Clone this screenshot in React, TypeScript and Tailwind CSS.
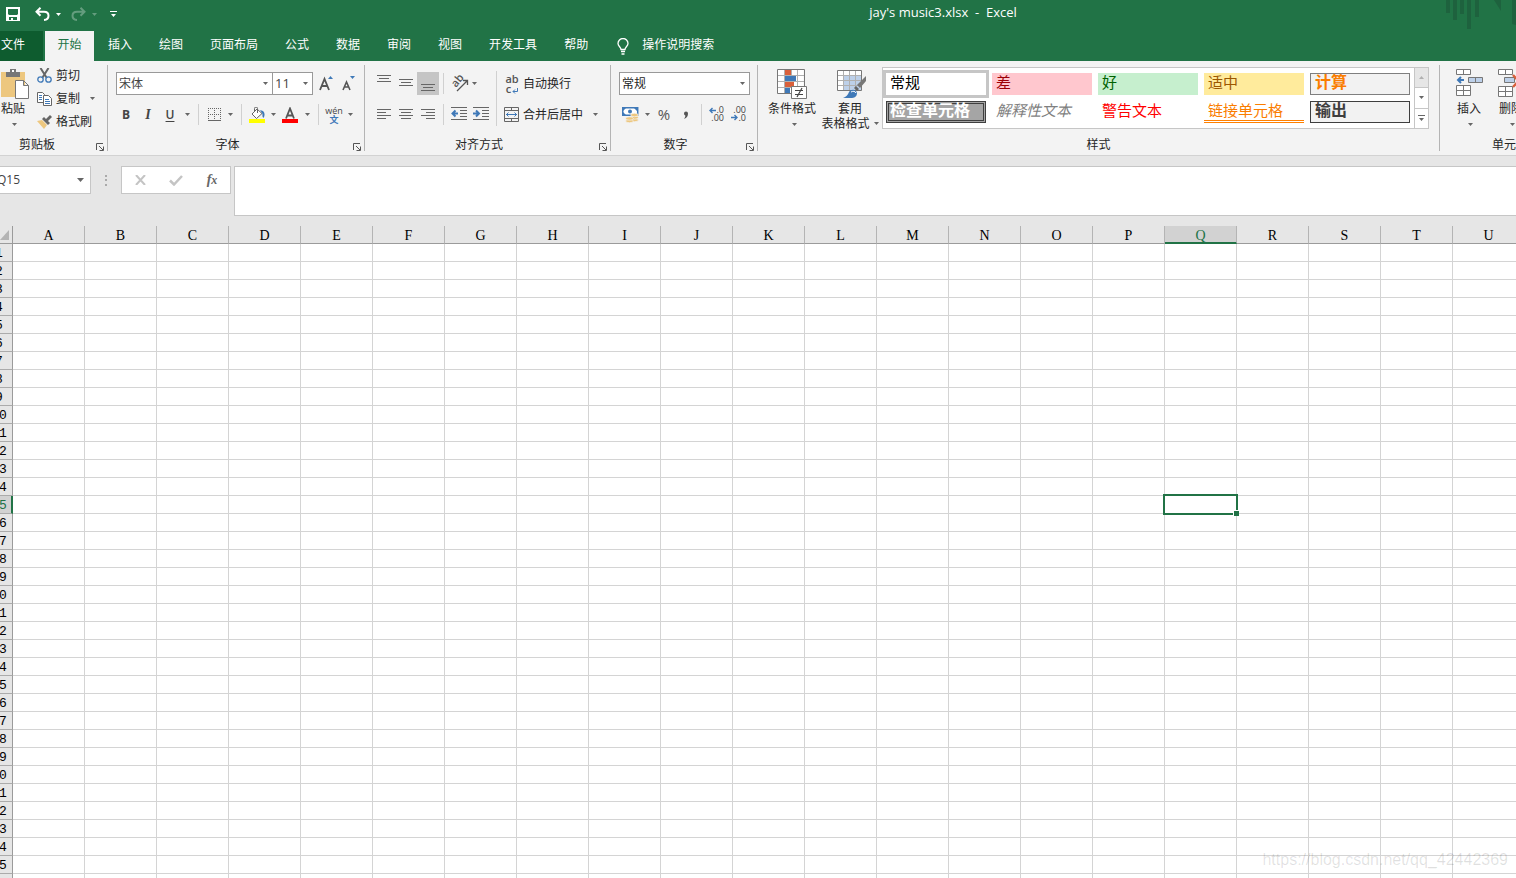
import React from "react"
import clsx from "clsx"

const TABS = ["插入", "绘图", "页面布局", "公式", "数据", "审阅", "视图", "开发工具", "帮助"]
const COLUMNS = "ABCDEFGHIJKLMNOPQRSTU".split("")
const ROWS = Array.from({ length: 36 }, (_, i) => i + 1)

const ACTIVE_COLUMN = "Q"
const ACTIVE_ROW = 15

const CELL_STYLES = [
  { name: "常规", className: "pl-1 bg-white text-black ring-3 ring-[#c6c6c6]" },
  { name: "差", className: "pl-1 bg-[#ffc7ce] text-[#9c0006]" },
  { name: "好", className: "pl-1 bg-[#c6efce] text-[#006100]" },
  { name: "适中", className: "pl-1 bg-[#ffeb9c] text-[#9c5700]" },
  { name: "计算", className: "pl-1 bg-[#f2f2f2] text-base leading-4 font-bold text-[#fa7d00] border border-[#7f7f7f]" },
  { name: "检查单元格", className: "pl-px bg-[#a5a5a5] text-base leading-3 font-bold text-white border-3 border-double border-[#3f3f3f]" },
  { name: "解释性文本", className: "pl-1 italic text-[#7f7f7f]" },
  { name: "警告文本", className: "pl-1 text-[#ff0000]" },
  { name: "链接单元格", className: "pl-1 text-[#fa7d00] border-b-3 border-double border-[#ff8001]" },
  { name: "输出", className: "pl-1 bg-[#f2f2f2] text-base leading-4 font-bold text-[#3f3f3f] border border-[#3f3f3f]" },
]

export default function App() {
  return (
    <div className="relative flex h-screen flex-col overflow-hidden bg-[#e6e6e6] font-['Open_Sans','Noto_Sans_CJK_SC',sans-serif] text-xs text-[#262626]">
      <TitleBar />
      <TabBar />
      <Ribbon />
      <FormulaBar />
      <Sheet />
      <p className="pointer-events-none absolute right-2 bottom-2 font-['Liberation_Sans',sans-serif] text-base leading-5 text-black/12">
        https://blog.csdn.net/qq_42442369
      </p>
    </div>
  )
}

function TitleBar() {
  return (
    <header className="relative flex h-[31px] shrink-0 items-start bg-[#217346] text-white">
      <div className="flex h-7 w-[370px] shrink-0 items-center pl-1.5">
        <button aria-label="保存" className="mr-[15px]">
          <svg width="14" height="14" viewBox="0 0 14 14" fill="#fff" fillRule="evenodd">
            <path d="M0 0h14v14H0zM2 2v5l1 1h8l1-1V2zM3 10v3h2v-2h2v2h4v-3z" />
          </svg>
        </button>
        <button aria-label="撤消">
          <svg width="15" height="14" viewBox="0 0 15 14" fill="none" stroke="#fff" strokeWidth="2">
            <path d="M5.500 .8 1.500 4.800l4 4M2 4.800h7c3 0 4.500 1.800 4.500 4S12 12.800 9 13" />
          </svg>
        </button>
        <ArrowButton label="撤消选项" className="w-4" />
        <button aria-label="恢复" className="ml-[5px] opacity-30">
          <svg width="15" height="14" viewBox="0 0 15 14" fill="none" stroke="#fff" strokeWidth="2">
            <path d="M9.500 .8l4 4-4 4M13 4.800H6c-3 0-4.500 1.800-4.500 4S3 12.800 6 13" />
          </svg>
        </button>
        <ArrowButton label="恢复选项" className="w-4 opacity-30" />
        <button aria-label="自定义快速访问工具栏" className="ml-2">
          <svg width="7" height="7" viewBox="0 0 7 7" fill="#fff">
            <path d="M0 0h7v1H0zM1 3h5L3.500 6z" />
          </svg>
        </button>
      </div>
      <h1 className="flex-1 text-center text-[13px] leading-6 whitespace-pre">{"jay's music3.xlsx  -  Excel"}</h1>
      <svg className="absolute top-0 right-0" width="72" height="31" viewBox="0 0 72 31" fill="#1e623e">
        <path d="M2 0h4v13H2zM9 0h4v20H9zM16 0h4v14h-4zM23 0h4v29h-4zM31 0h4v17h-4zM50 0h7v11zM68 0h4v25l-4-1z" />
      </svg>
    </header>
  )
}

function TabBar() {
  return (
    <nav className="flex h-[30px] shrink-0 items-stretch bg-[#217346] text-white">
      <button className="mr-0.5 w-[43px] bg-[#0e5c2f] pb-[3px] pl-px text-left whitespace-nowrap">文件</button>
      <button className="w-[49px] bg-[#f3f3f3] pb-[3px] text-[#217346]">开始</button>
      <div className="ml-3.5 flex gap-[27px]">
        {TABS.map((tab) => (
          <button key={tab} className="pb-[3px]">{tab}</button>
        ))}
      </div>
      <button className="ml-[29px] flex items-center gap-[13px] pb-[3px]">
        <svg className="mt-1" width="12" height="17" viewBox="0 0 12 17" fill="none" stroke="#fff" strokeWidth="1.300">
          <path d="M4 11.500C4 9 1 8.500 1 5.500a5 5 0 0 1 10 0c0 3-3 3.500-3 6zM4 13.500h4M4.500 16h3" />
        </svg>
        操作说明搜索
      </button>
    </nav>
  )
}

function Ribbon() {
  return (
    <div className="flex h-[95px] shrink-0 border-b border-[#d2d2d2] bg-[#f3f3f3]">
      <ClipboardGroup />
      <Divider />
      <FontGroup />
      <Divider />
      <AlignmentGroup />
      <Divider />
      <NumberGroup />
      <Divider />
      <StylesGroup />
      <Divider />
      <CellsGroup />
    </div>
  )
}

type GroupProps = {
  label: string,
  launcher?: boolean,
  className?: string,
  labelClassName?: string,
  children: React.ReactNode,
}

function Group({ label, launcher = false, className = "", labelClassName = "", children }: GroupProps) {
  return (
    <section aria-label={label} className={clsx("flex shrink-0 flex-col", className)}>
      <div className="flex h-[73px] items-start">{children}</div>
      <div className="flex h-5 items-center pt-0.5">
        <span className={clsx("flex-1 text-center", labelClassName)}>{label}</span>
        {launcher && (
          <button aria-label={`${label}设置`} className="mt-1 w-[17px] pl-1.5">
            <svg width="8" height="8" viewBox="0 0 8 8" fill="none" stroke="#555">
              <path d="M.5 7V.5H7M3 3l4 4M7.500 3.500v4h-4" />
            </svg>
          </button>
        )}
      </div>
    </section>
  )
}

function Divider() {
  return <div className="my-1 w-px shrink-0 bg-[#b4b4b4]" />
}

function Separator({ className = "mx-[5px] h-[21px]" }: { className?: string }) {
  return <div className={clsx("w-px shrink-0 bg-[#d0d0d0]", className)} />
}

function Arrow() {
  return (
    <svg className="inline-block" width="5" height="3" viewBox="0 0 5 3" fill="currentColor">
      <path d="M0 0h5L2.500 3z" />
    </svg>
  )
}

function ArrowButton({ label, className = "w-3 text-[#666]" }: { label: string, className?: string }) {
  return (
    <button aria-label={label} className={clsx("flex h-[22px] shrink-0 items-center justify-center", className)}>
      <Arrow />
    </button>
  )
}

type ToolProps = {
  label: string,
  className?: string,
  children: React.ReactNode,
}

function Tool({ label, className = "w-[22px]", children }: ToolProps) {
  return (
    <button aria-label={label} className={clsx("flex h-[23px] shrink-0 items-center justify-center", className)}>
      {children}
    </button>
  )
}

function Picker({ label, value, className }: { label: string, value: string, className: string }) {
  return (
    <div className={clsx("relative h-[23px] border border-[#999] bg-white", className)}>
      <select aria-label={label} className="block h-full w-full appearance-none bg-transparent pl-0.5">
        <option>{value}</option>
      </select>
      <span className="pointer-events-none absolute inset-y-0 right-1 flex items-center text-[#666]">
        <Arrow />
      </span>
    </div>
  )
}

function ClipboardGroup() {
  return (
    <Group label="剪贴板" launcher className="w-[107px]" labelClassName="pr-4">
      <button className="flex w-[30px] flex-col items-start pt-[7px] pl-px leading-4 whitespace-nowrap">
        <svg className="mb-px" width="29" height="32" viewBox="0 0 29 32">
          <path d="M0 4h24v25H0z" fill="#edc77f" />
          <path d="M5 4h4V1h6v3h4v5H5z" fill="#777" />
          <path d="M11 2h2v2h-2z" fill="#fff" />
          <path d="M14.500 12.500h8l5 5v13h-13zM22.500 12.500v5h5" fill="#fff" stroke="#777" />
        </svg>
        粘贴
        <span className="flex h-3.5 w-[26px] items-center justify-center text-[#666]"><Arrow /></span>
      </button>
      <div className="flex flex-col items-start pt-[3px] pl-[7px]">
        <button className="flex h-[23px] items-center gap-1">
          <svg width="15" height="15" viewBox="0 0 15 15" fill="none">
            <path d="M3.500 0 9.800 10M11.500 0 5.200 10" stroke="#666" strokeWidth="2" />
            <circle cx="3.500" cy="11.500" r="2.700" stroke="#3f79b8" strokeWidth="1.300" />
            <circle cx="11.500" cy="11.500" r="2.700" stroke="#3f79b8" strokeWidth="1.300" />
          </svg>
          剪切
        </button>
        <div className="flex">
          <button className="flex h-[23px] items-center gap-1">
            <svg width="15" height="14" viewBox="0 0 15 14" fill="#fff" stroke="#666">
              <path d="M.5.5h5l2 2v8h-7z" />
              <path d="M6.500 3.500h5l3 3v7h-8z" />
              <path d="M2 3.500h3M2 5.500h3M2 7.500h3M8 7.500h4M8 9.500h5M8 11.500h5" stroke="#3f79b8" />
            </svg>
            复制
          </button>
          <ArrowButton label="复制选项" className="ml-1.5 w-3 text-[#666]" />
        </div>
        <button className="flex h-[23px] items-center gap-1">
          <svg width="15" height="14" viewBox="0 0 15 14">
            <path d="m0 6 5-1 5 5-3 4z" fill="#edc77f" />
            <path d="m5 4 2-2 2 2 4-4 2 2-4 4 2 2-2 2z" fill="#666" />
          </svg>
          格式刷
        </button>
      </div>
    </Group>
  )
}

function FontGroup() {
  return (
    <Group label="字体" launcher className="w-64">
      <div className="pt-[11px] pl-[7px] text-[#444]">
        <div className="mb-2 ml-px flex">
          <Picker label="字体" value="宋体" className="w-[157px]" />
          <Picker label="字号" value="11" className="-ml-px w-[41px] text-[13px]" />
          <Tool label="增大字号" className="ml-0.5 w-[22px]">
            <svg width="14" height="15" viewBox="0 0 14 15">
              <path d="M1 14 5.500 3 10 14M3 10h5" fill="none" stroke="#555" strokeWidth="1.800" />
              <path d="M9 3h5l-2.500-3z" fill="#3f79b8" />
            </svg>
          </Tool>
          <Tool label="减小字号">
            <svg width="13" height="15" viewBox="0 0 13 15">
              <path d="M1 14 4.500 6 8 14M2.500 11h4" fill="none" stroke="#555" strokeWidth="1.600" />
              <path d="M8 0h5l-2.500 3z" fill="#3f79b8" />
            </svg>
          </Tool>
        </div>
        <div className="flex items-center">
          <Tool label="加粗"><b>B</b></Tool>
          <Tool label="倾斜"><i className="font-['Liberation_Serif',serif] text-sm font-bold">I</i></Tool>
          <Tool label="下划线"><span className="font-semibold underline underline-offset-2">U</span></Tool>
          <ArrowButton label="下划线选项" />
          <Separator />
          <Tool label="边框" className="w-5">
            <svg width="13" height="13" viewBox="0 0 13 13" stroke="#666" shapeRendering="crispEdges">
              <path d="M0 .5h13M0 6.500h13M.5 0v12M6.500 0v12M12.500 0v12" strokeDasharray="1 1" />
              <path d="M0 12.500h13" />
            </svg>
          </Tool>
          <ArrowButton label="边框选项" />
          <Separator />
          <Tool label="填充颜色" className="w-5">
            <svg width="16" height="16" viewBox="0 0 16 16">
              <path d="M3 7 8 2l5 4.500-5.500 5z" fill="#fff" stroke="#666" />
              <path d="M5.500 5V1.500a1.500 1.500 0 0 1 3 0V6" fill="none" stroke="#666" />
              <path d="m11 3 3 1c2 1.500 2 5 .5 7-1.500-1-1-3-1-4z" fill="#3f79b8" />
              <path d="M0 12h16v4H0z" fill="#ff0" />
            </svg>
          </Tool>
          <ArrowButton label="填充颜色选项" />
          <Tool label="字体颜色">
            <svg width="16" height="16" viewBox="0 0 16 16">
              <path d="M4 11.500 8 1.500l4 10M5.500 8.500h5" fill="none" stroke="#555" strokeWidth="1.800" />
              <path d="M0 12h16v4H0z" fill="red" />
            </svg>
          </Tool>
          <ArrowButton label="字体颜色选项" />
          <Separator />
          <Tool label="拼音指南" className="w-5 flex-col text-[9px] leading-[9px]">
            <span>wén</span>
            <span className="font-bold text-[#3f79b8]">文</span>
          </Tool>
          <ArrowButton label="拼音指南选项" />
        </div>
      </div>
    </Group>
  )
}

function Lines({ d, className }: { d: string, className?: string }) {
  return (
    <svg className={className} width="14" height="10" viewBox="0 0 14 10" stroke="#666" shapeRendering="crispEdges">
      <path d={d} />
    </svg>
  )
}

function AlignmentGroup() {
  return (
    <Group label="对齐方式" launcher className="w-[245px]">
      <div className="pt-[11px] pl-2">
        <div className="mb-2 flex items-center">
          <Tool label="顶端对齐"><Lines className="mb-2" d="M0 .5h14M2 3.500h10M0 6.500h14" /></Tool>
          <Tool label="垂直居中"><Lines d="M0 .5h14M2 3.500h10M0 6.500h14" /></Tool>
          <Tool label="底端对齐" className="w-[22px] bg-[#c5c5c5]"><Lines className="mt-2" d="M0 1.500h14M2 4.500h10M0 7.500h14" /></Tool>
          <Separator className="mx-1 h-[21px]" />
          <Tool label="方向">
            <svg className="overflow-visible" width="17" height="17" viewBox="0 0 17 17" fill="none" stroke="#555">
              <text transform="translate(5 13) rotate(-50)" fontSize="11" fontWeight="600" fill="#555" stroke="none">ab</text>
              <path d="m6 16 10-10M12 5.500h4.500V10" strokeWidth="1.300" />
            </svg>
          </Tool>
          <ArrowButton label="方向选项" className="w-2 text-[#666]" />
        </div>
        <div className="flex items-center">
          <Tool label="左对齐"><Lines className="mb-0.5" d="M0 .5h14M0 3.500h9M0 6.500h14M0 9.500h9" /></Tool>
          <Tool label="居中"><Lines className="mb-0.5" d="M0 .5h14M2 3.500h10M0 6.500h14M2 9.500h10" /></Tool>
          <Tool label="右对齐"><Lines className="mb-0.5" d="M0 .5h14M5 3.500h9M0 6.500h14M5 9.500h9" /></Tool>
          <Separator className="mx-1 h-[21px]" />
          <Tool label="减少缩进量">
            <svg className="mb-0.5" width="16" height="13" viewBox="0 0 16 13" stroke="#666">
              <path d="M0 .5h16M9 3.500h7M9 6.500h7M9 9.500h7M0 12.500h16" />
              <path d="M7 6.500H2M4.500 3.500l-3 3 3 3" fill="none" stroke="#3f79b8" strokeWidth="2" />
            </svg>
          </Tool>
          <Tool label="增加缩进量">
            <svg className="mb-0.5" width="16" height="13" viewBox="0 0 16 13" stroke="#666">
              <path d="M0 .5h16M9 3.500h7M9 6.500h7M9 9.500h7M0 12.500h16" />
              <path d="M0 6.500h5M3 3.500l3 3-3 3" fill="none" stroke="#3f79b8" strokeWidth="2" />
            </svg>
          </Tool>
        </div>
      </div>
      <Separator className="mx-1 mt-2.5 h-[55px]" />
      <div className="pt-[11px] pl-[3px]">
        <button className="mb-2 flex h-[23px] items-center gap-[3px]">
          <span className="flex w-4 flex-col items-center text-[11px] leading-[10px] font-semibold text-[#555]">
            <span>ab</span>
            <span className="flex items-end gap-px">
              c
              <svg width="6" height="6" viewBox="0 0 6 6" fill="none" stroke="#3f79b8">
                <path d="M5.500 0v3.500H1M3 1.500l-2 2 2 2" />
              </svg>
            </span>
          </span>
          自动换行
        </button>
        <div className="flex items-center">
          <button className="flex h-[23px] items-center gap-[3px]">
            <svg width="16" height="15" viewBox="0 0 16 15" fill="none" stroke="#666">
              <path d="M.5.5h14v14H.5zM.5 3.500h14M.5 11.500h14M7.500.5v3M7.500 11.500v3" />
              <path d="M2 7.500h11M4.500 5.500l-2 2 2 2M10.500 5.500l2 2-2 2" stroke="#3f79b8" />
            </svg>
            合并后居中
          </button>
          <ArrowButton label="合并选项" className="ml-1.5 w-3 text-[#666]" />
        </div>
      </div>
    </Group>
  )
}

function NumberGroup() {
  return (
    <Group label="数字" launcher className="w-[146px]">
      <div className="pt-[11px] pl-2">
        <Picker label="数字格式" value="常规" className="mb-2 w-[131px]" />
        <div className="flex items-center text-[#555]">
          <Tool label="会计数字格式">
            <svg width="17" height="16" viewBox="0 0 17 16">
              <path d="M.7.7h15v7.500H.7z" fill="#fff" stroke="#3f79b8" strokeWidth="1.500" />
              <path d="M1 1h3L1 4zM15 1h-3l3 3zM1 8V5l3 3z" fill="#3f79b8" />
              <circle cx="8" cy="4.500" r="2" fill="#3f79b8" />
              <g fill="#edc77f" stroke="#f3f3f3" strokeWidth=".7">
                <ellipse cx="12.500" cy="13" rx="3.800" ry="1.700" />
                <ellipse cx="12.500" cy="10.500" rx="3.800" ry="1.700" />
                <ellipse cx="12.500" cy="8" rx="3.800" ry="1.700" />
                <ellipse cx="7.500" cy="14" rx="3.800" ry="1.700" />
                <ellipse cx="7.500" cy="11.500" rx="3.800" ry="1.700" />
              </g>
            </svg>
          </Tool>
          <ArrowButton label="会计格式选项" />
          <Tool label="百分比样式"><span className="pb-0.5 text-[15px] leading-4">%</span></Tool>
          <Tool label="千位分隔样式">
            <svg width="6" height="8" viewBox="0 0 6 8" fill="#555">
              <path d="M1 2.500A2 2 0 0 1 5 2.500C5 5 4 7 1 8c1-1.500 1.500-2.500 1.300-3.500A2 2 0 0 1 1 2.500z" />
            </svg>
          </Tool>
          <Separator className="mx-1 h-[21px]" />
          <Tool label="增加小数位数">
            <Decimals top=".0" bottom=".00" arrow="top" />
          </Tool>
          <Tool label="减少小数位数">
            <Decimals top=".00" bottom=".0" arrow="bottom" />
          </Tool>
        </div>
      </div>
    </Group>
  )
}

function Decimals({ top, bottom, arrow }: { top: string, bottom: string, arrow: "top" | "bottom" }) {
  return (
    <svg className="overflow-visible" width="16" height="15" viewBox="0 0 16 15" fill="#444" fontSize="9" textAnchor="end">
      <text x="15" y="6">{top}</text>
      <text x="15" y="14">{bottom}</text>
      {arrow === "top"
        ? <path d="M1 3.500h6M3.500 1 1 3.500 3.500 6" fill="none" stroke="#3f79b8" strokeWidth="1.400" />
        : <path d="M0 10.500h6M3.500 8 6 10.500 3.500 13" fill="none" stroke="#3f79b8" strokeWidth="1.400" />}
    </svg>
  )
}

function StylesGroup() {
  return (
    <Group label="样式" className="min-w-0 flex-1">
      <button className="ml-[9px] flex w-[50px] shrink-0 flex-col items-center pt-2 leading-4 whitespace-nowrap">
        <svg className="mb-0.5" width="30" height="30" viewBox="0 0 30 30">
          <path d="M.5.5h26v24H.5z" fill="#fff" />
          <path d="M8 1h6v5H8zM8 13h9v5H8z" fill="#d9603b" />
          <path d="M8 7h11v5H8zM8 19h5v5H8z" fill="#3f79b8" />
          <path d="M.5 6.500h27M.5 12.500h27M.5 18.500h27M7.500.5v24M14.500.5v6M20.500.5v24" stroke="#b0b0b0" fill="none" />
          <path d="M.5.5h27v24H.5z" stroke="#777" fill="none" />
          <path d="M14.500 17.500h15v12h-15z" fill="#fff" stroke="#777" />
          <path d="M18 21.500h8M18 25.500h8M25 19l-5 9" stroke="#444" strokeWidth="1.200" />
        </svg>
        条件格式
        <span className="flex h-3.5 items-center pl-1 text-[#666]"><Arrow /></span>
      </button>
      <button className="ml-1 flex w-[58px] shrink-0 flex-col items-center pt-[9px] leading-[15px] whitespace-nowrap">
        <svg className="mb-0.5 ml-[3px]" width="30" height="29" viewBox="0 0 30 29">
          <path d="M.5.5h24v20H.5z" fill="#fff" />
          <path d="M6 5h18v15H6z" fill="#bdd0e9" />
          <path d="M.5 5.500h24M.5 10.500h24M.5 15.500h24M6.500.5v20M12.500.5v20M18.500.5v20" stroke="#b0b0b0" />
          <path d="M.5.5h24v20H.5z" stroke="#777" fill="none" />
          <path d="M29 6v5l-6 7-3-3z" fill="#777" />
          <path d="m19 16 3 3-2 2-3-3z" fill="#666" />
          <path d="M6 28c3-1 5-3 6-6 2-3 7-3 8 1 0 4-3 5-6 5z" fill="#3f79b8" />
          <path d="M14 22c2-1 4-1 5 1" stroke="#fff" fill="none" />
        </svg>
        套用
        <span className="flex items-center gap-1">
          表格格式
          <span className="flex text-[#666]"><Arrow /></span>
        </span>
      </button>
      <div className="mt-1.5 mr-2.5 ml-[3px] flex h-[62px] flex-1 border border-[#c6c6c6] bg-white">
        <div className="grid flex-1 grid-cols-5 grid-rows-[22px_22px] gap-1.5 pt-[5px] pr-1 pl-[3px] text-[15px] leading-[18px]">
          {CELL_STYLES.map((style) => (
            <button key={style.name} className={clsx("flex items-start whitespace-nowrap", style.className)}>
              {style.name}
            </button>
          ))}
        </div>
        <div className="flex w-3.5 flex-col divide-y divide-[#c6c6c6] border-l border-[#c6c6c6] text-[#666]">
          <button aria-label="上一行" className="flex flex-1 items-center justify-center bg-[#e6e6e6] text-[#b0b0b0]">
            <svg width="5" height="3" viewBox="0 0 5 3" fill="currentColor"><path d="M0 3h5L2.500 0z" /></svg>
          </button>
          <button aria-label="下一行" className="flex flex-1 items-center justify-center"><Arrow /></button>
          <button aria-label="其他" className="flex flex-1 items-center justify-center">
            <svg width="7" height="7" viewBox="0 0 7 7" fill="currentColor"><path d="M0 0h7v1H0zM1 3h5L3.500 6z" /></svg>
          </button>
        </div>
      </div>
    </Group>
  )
}

function CellsGroup() {
  return (
    <div className="w-[76px] shrink-0 overflow-hidden">
      <Group label="单元格" className="w-[140px]">
        <button className="ml-[9px] flex w-10 flex-col items-center pt-2 leading-4">
          <svg className="mb-0.5" width="27" height="30" viewBox="0 0 27 30" fill="#fff" stroke="#777">
            <path d="M.5.5h14v5H.5zM7.500.5v5M.5 16.500h14v10H.5zM.5 21.500h14M7.500 16.500v10" />
            <path d="M12.500 8.500h14v5h-14zM19.500 8.500v5" fill="#bdd0e9" />
            <path d="M8 11H2M5 8l-3 3 3 3" fill="none" stroke="#3f79b8" strokeWidth="2" />
          </svg>
          插入
          <span className="flex h-3.5 items-center pl-0.5 text-[#666]"><Arrow /></span>
        </button>
        <button className="ml-0.5 flex w-10 flex-col items-center pt-2 leading-4">
          <svg className="mb-0.5" width="27" height="30" viewBox="0 0 27 30" fill="#fff" stroke="#777">
            <path d="M.5.5h14v5H.5zM7.500.5v5M.5 17.500h14v10H.5zM.5 22.500h14M7.500 17.500v10" />
            <path d="M6.500 8.500h10v5h-10z" fill="#bdd0e9" />
            <path d="m15 6 11 12M26 6 15 18" stroke="#d9603b" strokeWidth="2.500" />
          </svg>
          删除
          <span className="flex h-3.5 items-center pl-0.5 text-[#666]"><Arrow /></span>
        </button>
      </Group>
    </div>
  )
}

function FormulaBar() {
  return (
    <div className="flex h-[70px] shrink-0 items-start pt-2.5">
      <div className="flex h-7 w-[91px] shrink-0 items-center border border-l-0 border-[#c6c6c6] bg-white pr-1">
        <input aria-label="名称框" defaultValue="Q15" className="w-0 flex-1 -indent-[3px] text-[#444] outline-none" />
        <button aria-label="名称列表" className="text-[#666]">
          <svg width="11" height="4" viewBox="0 0 11 4" fill="currentColor"><path d="M2 0h7L5.500 4z" /></svg>
        </button>
      </div>
      <div className="flex h-7 w-[30px] shrink-0 items-center justify-center">
        <svg width="2" height="11" viewBox="0 0 2 11" fill="#aaa"><path d="M0 0h2v2H0zM0 4h2v2H0zM0 9h2v2H0z" /></svg>
      </div>
      <div className="mr-[3px] flex h-7 shrink-0 border border-[#c6c6c6] bg-white">
        <button aria-label="取消" className="flex w-9 items-center justify-center">
          <svg width="11" height="10" viewBox="0 0 11 10" stroke="#c4c4c4" strokeWidth="2"><path d="m1 0 9 10M10 0 1 10" /></svg>
        </button>
        <button aria-label="输入" className="flex w-9 items-center justify-center">
          <svg width="14" height="11" viewBox="0 0 14 11" fill="none" stroke="#c4c4c4" strokeWidth="2.500"><path d="m1 5.500 4 4L13 1" /></svg>
        </button>
        <button aria-label="插入函数" className="w-9 font-['Liberation_Serif',serif] text-sm leading-6 font-bold text-[#666] italic">
          f<span className="text-xs">x</span>
        </button>
      </div>
      <textarea aria-label="编辑栏" className="h-[50px] flex-1 resize-none border border-r-0 border-[#c6c6c6] bg-white outline-none" />
    </div>
  )
}

function Sheet() {
  return (
    <main className="min-h-0 flex-1 overflow-hidden bg-white">
      <table className="w-max border-separate border-spacing-0 text-black">
        <thead>
          <tr className="h-[18px] bg-[#e6e6e6] font-['Liberation_Serif',serif] text-sm">
            <th className="border-r border-b border-[#9b9b9b] p-0">
              <svg width="10" height="10" viewBox="0 0 10 10" fill="#b4b4b4"><path d="M9 0v10H0z" /></svg>
            </th>
            {COLUMNS.map((column) => (
              <th
                key={column}
                className={clsx(
                  "w-[72px] min-w-[72px] border-r border-r-[#b4b4b4] px-0 pt-[3px] pb-0 font-normal",
                  column === ACTIVE_COLUMN
                    ? "border-b-2 border-b-[#217346] bg-[#d2d2d2] leading-[13px] text-[#217346]"
                    : "border-b border-b-[#9b9b9b] leading-[14px]",
                )}
              >
                {column}
              </th>
            ))}
          </tr>
        </thead>
        <tbody>
          {ROWS.map((row) => (
            <SheetRow key={row} row={row} />
          ))}
        </tbody>
      </table>
    </main>
  )
}

function SheetRow({ row }: { row: number }) {
  const active = row === ACTIVE_ROW
  return (
    <tr className="h-[18px]">
      <th
        className={clsx(
          "border-b border-b-[#ababab] p-0 font-['Liberation_Mono',monospace] text-[13px] font-normal",
          active ? "border-r-2 border-r-[#217346] bg-[#d2d2d2] text-[#217346]" : "border-r border-r-[#9b9b9b] bg-[#e6e6e6]",
        )}
      >
        <div className={clsx("flex h-[17px] items-end justify-end overflow-hidden leading-[15px]", active ? "w-[11px] pr-1" : "w-3 pr-[5px]")}>
          <span className="w-4 shrink-0 text-center">{row}</span>
        </div>
      </th>
      {COLUMNS.map((column) => (
        <td key={column} className="relative border-r border-b border-[#d4d4d4] p-0">
          {active && column === ACTIVE_COLUMN && <Selection />}
        </td>
      ))}
    </tr>
  )
}

// Frame around the active cell, laid over the grid lines
function Selection() {
  return (
    <div className="absolute -inset-0.5 z-10 border-2 border-[#217346]">
      <span className="absolute -right-[3px] -bottom-[3px] size-1.5 border-t border-l border-white bg-[#217346]" />
    </div>
  )
}
